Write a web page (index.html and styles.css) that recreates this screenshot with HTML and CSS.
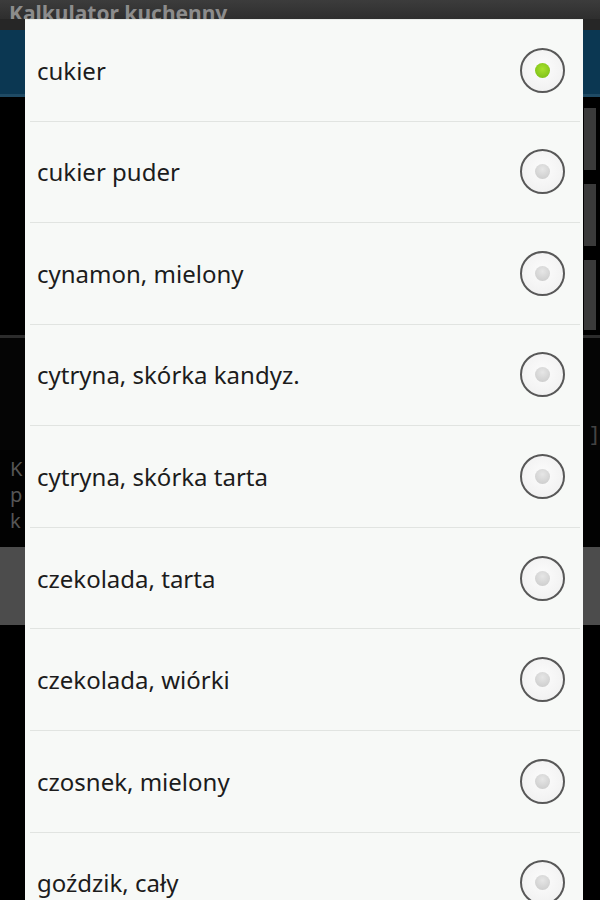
FILE: index.html
```html
<!DOCTYPE html>
<html lang="pl">
<head>
<meta charset="utf-8">
<title>Kalkulator kuchenny</title>
<link rel="stylesheet" href="styles.css">
</head>
<body>
<div class="screen">
  <div class="titlebar">Kalkulator kuchenny</div>
  <div class="gap"></div>
  <div class="blueband"></div>
  <div class="fields">
    <div class="field"></div>
    <div class="field"></div>
    <div class="field"></div>
  </div>
  <div class="rule"></div>
  <div class="result"><span class="bracket">]</span></div>
  <div class="info">K<br>p<br>k</div>
  <div class="button"></div>
</div>

<div class="dialog">
  <ul class="list">
    <li class="row"><span class="label">cukier</span><span class="radio checked"></span></li>
    <li class="row"><span class="label">cukier puder</span><span class="radio"></span></li>
    <li class="row"><span class="label">cynamon, mielony</span><span class="radio"></span></li>
    <li class="row"><span class="label">cytryna, skórka kandyz.</span><span class="radio"></span></li>
    <li class="row"><span class="label">cytryna, skórka tarta</span><span class="radio"></span></li>
    <li class="row"><span class="label">czekolada, tarta</span><span class="radio"></span></li>
    <li class="row"><span class="label">czekolada, wiórki</span><span class="radio"></span></li>
    <li class="row"><span class="label">czosnek, mielony</span><span class="radio"></span></li>
    <li class="row"><span class="label">goździk, cały</span><span class="radio"></span></li>
  </ul>
</div>
</body>
</html>
```
FILE: styles.css
```css
* { box-sizing: border-box; }
html, body {
  margin: 0;
  padding: 0;
  width: 600px;
  height: 900px;
  overflow: hidden;
  background: #000;
  font-family: "Noto Sans", "Open Sans", "DejaVu Sans", sans-serif;
}
.screen {
  display: flex;
  flex-direction: column;
  width: 600px;
  height: 900px;
}
.titlebar {
  height: 19px;
  background: linear-gradient(#3c3c3c, #2e2e2e);
  color: #8c8c8c;
  font-weight: bold;
  font-size: 21px;
  line-height: 26px;
  padding-left: 9px;
  overflow: hidden;
}
.gap { height: 11px; background: #262626; }
.blueband {
  height: 67px;
  background: #0b3752;
  border-bottom: 3px solid #1f4a64;
}
.fields {
  height: 238px;
  display: flex;
  flex-direction: column;
  align-items: flex-end;
  gap: 14px;
  padding: 11px 4px 0 0;
}
.field {
  width: 12px;
  height: 62px;
  background: #3a3a3a;
}
.field:last-child { height: 70px; }
.rule { height: 3px; background: #2c2c2c; }
.result {
  height: 112px;
  background: #050505;
  display: flex;
  justify-content: flex-end;
  align-items: flex-end;
  padding: 0 2px 6px 0;
}
.bracket { color: #444; font-size: 22px; line-height: 22px; }
.info {
  height: 97px;
  background: #020202;
  color: #555;
  font-size: 20px;
  line-height: 26px;
  padding: 6px 0 0 10px;
}
.button {
  height: 78px;
  background: #4c4c4c;
}
.dialog {
  position: absolute;
  left: 25px;
  top: 19px;
  width: 558px;
  height: 900px;
  background: #f7f9f7;
  border-top: 1px solid #e8ebe8;
}
.list {
  list-style: none;
  margin: 0;
  padding: 0;
}
.row {
  height: 101.57px;
  margin: 0 3px 0 5px;
  border-bottom: 1px solid #e1e4e1;
  display: flex;
  align-items: center;
  justify-content: space-between;
  padding: 0 15px 0 7px;
}
.label {
  color: #1c1c1c;
  font-size: 24px;
}
.radio {
  width: 45px;
  height: 45px;
  border-radius: 50%;
  border: 2px solid #585858;
  background: radial-gradient(circle at 50% 45%, #fcfcfc, #eeeeee);
  display: flex;
  align-items: center;
  justify-content: center;
}
.radio::after {
  content: "";
  width: 15px;
  height: 15px;
  border-radius: 50%;
  background: radial-gradient(circle at 50% 35%, #e6e6e6, #c8c8c8);
}
.radio.checked::after {
  background: radial-gradient(circle at 50% 40%, #a8e22c, #74b814);
}
```
